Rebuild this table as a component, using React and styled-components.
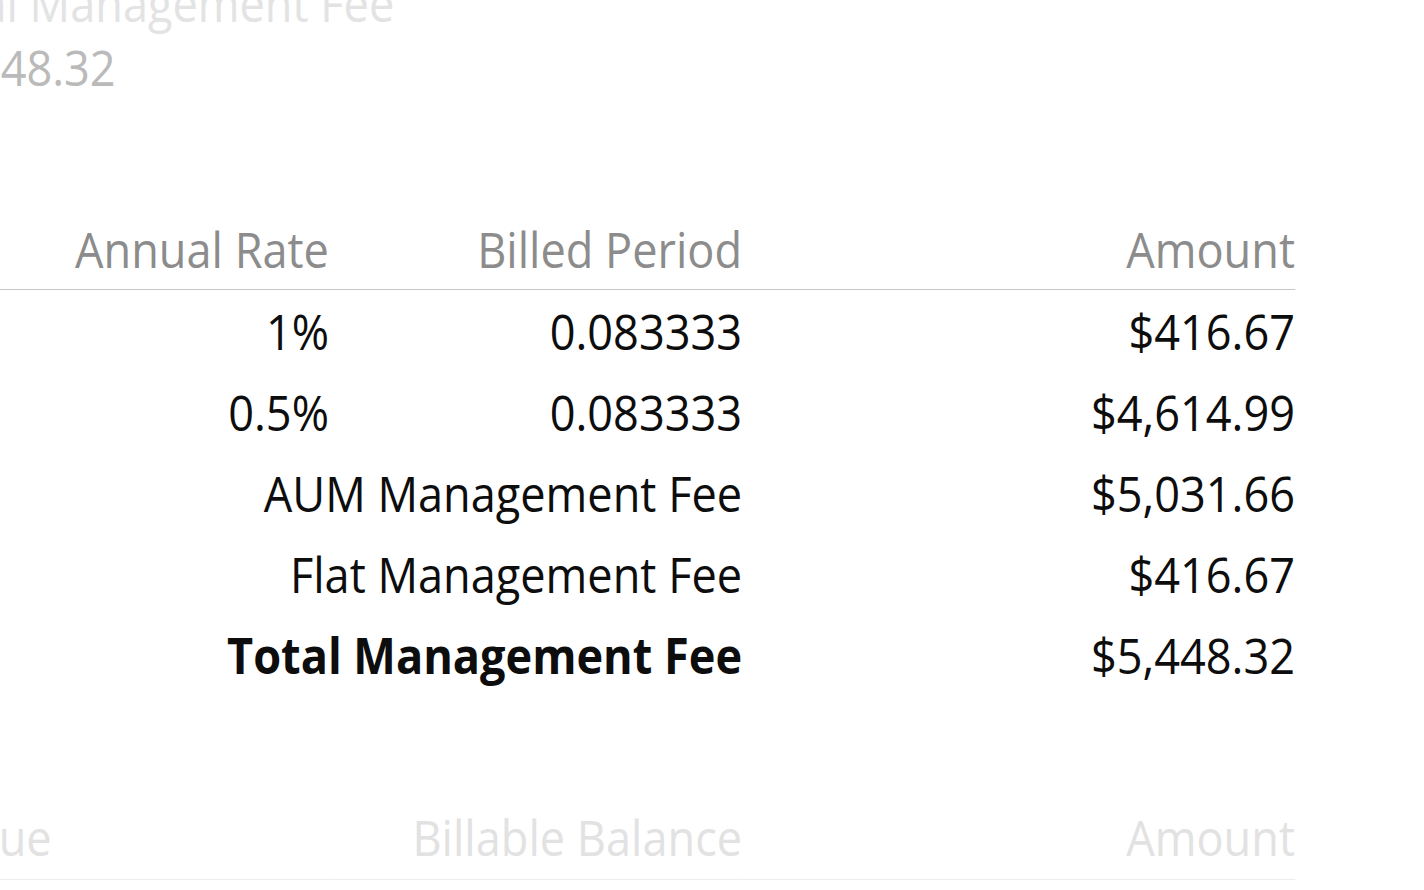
import React from "react";
import styled, { createGlobalStyle } from "styled-components";

const SX = 0.902;

const Global = createGlobalStyle`
  html, body { margin: 0; padding: 0; background: #ffffff; }
  body {
    font-family: "Open Sans", "Liberation Sans", sans-serif;
    width: 1424px;
    height: 890px;
    overflow: hidden;
  }
`;

/* The reference is a horizontally compressed view of the page, so the
   whole page is drawn at its natural size and narrowed with one scale. */
const Page = styled.div`
  margin-top: -29px;
  width: ${1424 / SX}px;
  font-size: 50px;
  line-height: 64px;
  transform: scaleX(${SX});
  transform-origin: 0 0;
`;

const Summary = styled.div`
  display: flex;
  flex-direction: column;
`;

const SummaryLabel = styled.div`
  color: #e3e3e3;
  white-space: nowrap;
  margin-left: -96px;
`;

const SummaryValue = styled.div`
  color: #bababa;
  white-space: nowrap;
  margin-left: -98px;
`;

const Table = styled.div`
  display: grid;
  grid-template-columns: 364.7px 458px 613px;
  width: 1435.7px;
  margin-top: ${(p) => p.$top}px;
  line-height: 68px;
`;

const HeadCell = styled.div`
  text-align: ${(p) => (p.$left ? "left" : "right")};
  color: ${(p) => (p.$faded ? "#e2e2e2" : "#8c8c8c")};
  padding-bottom: ${(p) => (p.$faded ? 8 : 6)}px;
  border-bottom: 1px solid ${(p) => (p.$faded ? "#ededed" : "#c6c6c6")};
  white-space: nowrap;
`;

const OffText = styled.span`
  display: inline-block;
  margin-left: ${(p) => p.$shift}px;
`;

const Cell = styled.div`
  grid-column: ${(p) => p.$span || "auto"};
  text-align: right;
  color: #0d0d0d;
  padding: 7px 0 6px;
  white-space: nowrap;
  font-weight: ${(p) => (p.$bold ? 700 : 400)};
`;

const rows = [
  { rate: "1%", period: "0.083333", amount: "$416.67" },
  { rate: "0.5%", period: "0.083333", amount: "$4,614.99" },
];

const totals = [
  { label: "AUM Management Fee", amount: "$5,031.66" },
  { label: "Flat Management Fee", amount: "$416.67" },
  { label: "Total Management Fee", amount: "$5,448.32", bold: true },
];

export default function App() {
  return (
    <>
      <Global />
      <Page>
        <Summary>
          <SummaryLabel>Total Management Fee</SummaryLabel>
          <SummaryValue>$5,448.32</SummaryValue>
        </Summary>

        <Table $top={116}>
          <HeadCell>Annual Rate</HeadCell>
          <HeadCell>Billed Period</HeadCell>
          <HeadCell>Amount</HeadCell>
          {rows.map((r, i) => (
            <React.Fragment key={i}>
              <Cell>{r.rate}</Cell>
              <Cell>{r.period}</Cell>
              <Cell>{r.amount}</Cell>
            </React.Fragment>
          ))}
          {totals.map((t, i) => (
            <React.Fragment key={i}>
              <Cell $span="1 / 3" $bold={t.bold}>{t.label}</Cell>
              <Cell>{t.amount}</Cell>
            </React.Fragment>
          ))}
        </Table>

        <Table $top={108}>
          <HeadCell $left $faded>
            <OffText $shift={-250}>Market Value</OffText>
          </HeadCell>
          <HeadCell $faded>Billable Balance</HeadCell>
          <HeadCell $faded>Amount</HeadCell>
        </Table>
      </Page>
    </>
  );
}
